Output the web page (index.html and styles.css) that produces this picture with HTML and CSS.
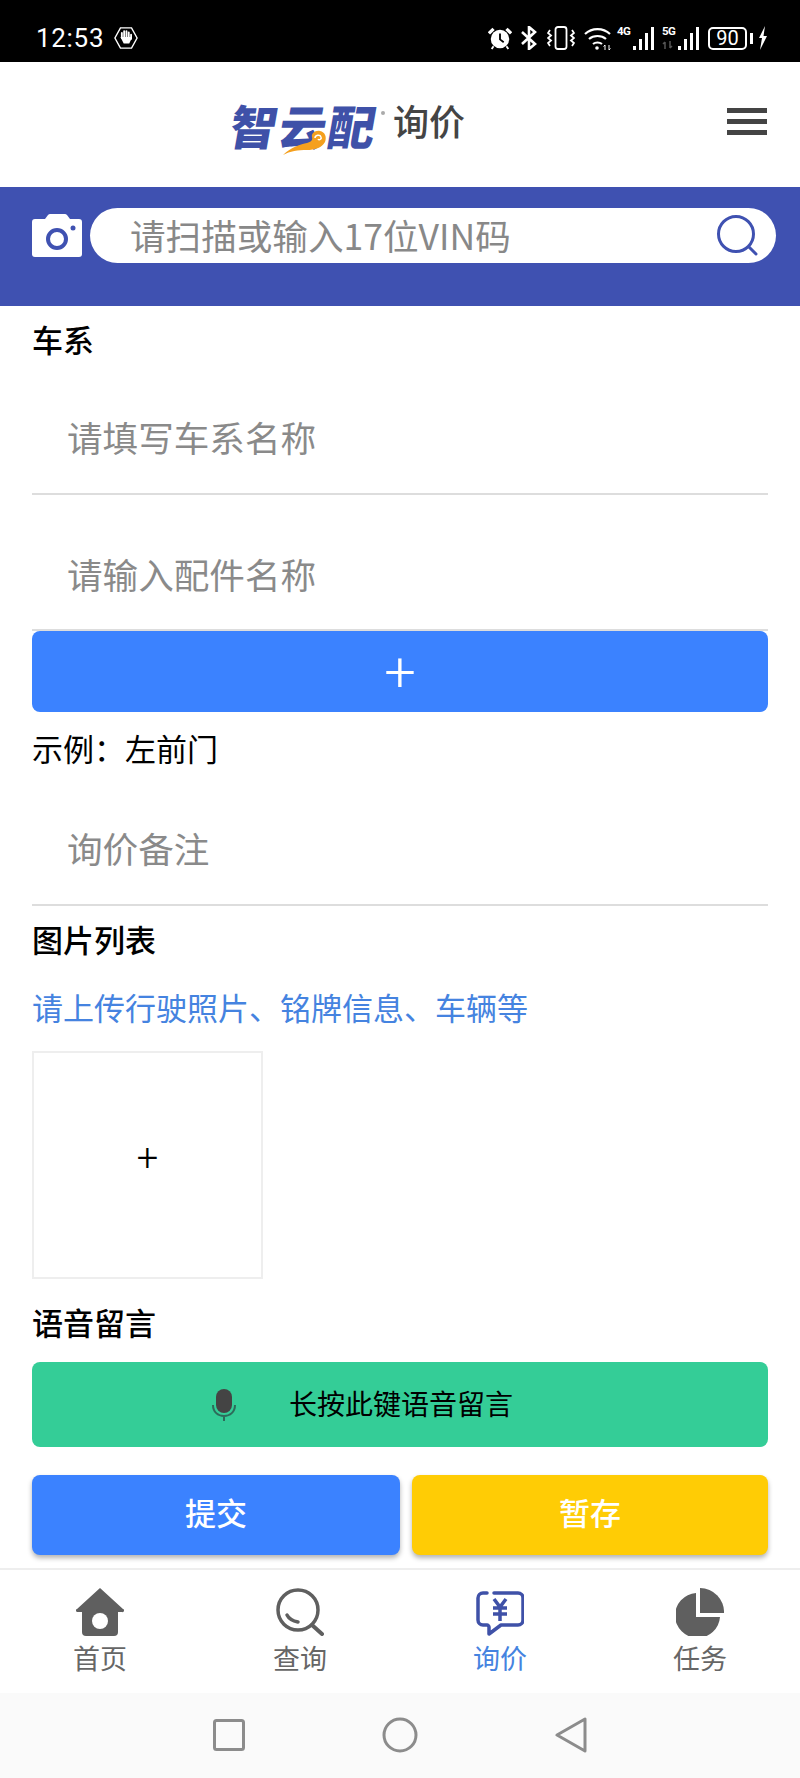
FILE: index.html
```html
<!DOCTYPE html>
<html lang="zh-CN">
<head>
    <meta charset="UTF-8">
    <meta name="viewport" content="width=device-width, initial-scale=1.0">
    <title>智云配 询价</title>
    <link rel="stylesheet" href="styles.css">
</head>
<body>
    <div class="phone">
        <!-- 状态栏 -->
        <div class="statusbar">
            <span class="time">12:53</span>
            <svg class="hand" width="24" height="24" viewBox="0 0 26 26" fill="none">
                <path d="M7 2h12l6 11-6 11H7L1 13z" stroke="#fff" stroke-width="1.500"/>
                <path d="M8.500 13V7.500M11 12V5.500M13.500 12V5.500M16 12.500V7M18.500 14V9.500" stroke="#fff" stroke-width="2" stroke-linecap="round"/>
                <path d="M7 12l2 0h9.500v3l-2 4h-6z" fill="#fff"/>
            </svg>
            <div class="status-right">
                <svg class="st-alarm" width="24" height="24" viewBox="0 0 26 26">
                    <circle cx="13" cy="14" r="10" fill="#fff"/>
                    <path d="M13 8v6.500l4 3" stroke="#000" stroke-width="2" fill="none"/>
                    <path d="M1 8l5-5M25 8l-5-5" stroke="#fff" stroke-width="3.500"/>
                    <path d="M6 22l-2 3M20 22l2 3" stroke="#fff" stroke-width="2"/>
                </svg>
                <svg class="st-bt" width="16" height="24" viewBox="0 0 16 24" fill="none">
                    <path d="M1 6l13 12-6 5V1l6 5L1 18" stroke="#fff" stroke-width="2.600"/>
                </svg>
                <svg class="st-vib" width="28" height="24" viewBox="0 0 28 24" fill="none" stroke="#fff" stroke-width="1.800">
                    <rect x="8.500" y="1" width="11" height="22" rx="2.500"/>
                    <path d="M3 4l-2 3 3 2.500-3 2.500 3 2.500-3 2.500 2 3M25 4l2 3-3 2.500 3 2.500-3 2.500 3 2.500-2 3"/>
                </svg>
                <svg class="st-wifi" width="27" height="24" viewBox="0 0 27 24" fill="none" stroke="#fff" stroke-width="2.200">
                    <path d="M1 8c7-6.500 18-6.500 25 0M5 13c4.500-4 12.500-4 17 0M9 18c2.500-2 6.500-2 9 0"/>
                    <circle cx="13" cy="22" r="1.800" fill="#fff" stroke="none"/>
                    <path d="M21 24v-5M19.500 20.500l1.500-1.500M25 19v5M26.500 22.500L25 24" stroke-width="1"/>
                </svg>
                <div class="signal st-sig4">
                    <span class="net">4G</span>
                    <span class="bar b1"></span><span class="bar b2"></span><span class="bar b3"></span><span class="bar b4"></span>
                </div>
                <div class="signal st-sig5">
                    <span class="net">5G</span>
                    <svg class="net-arrows" width="12" height="8" viewBox="0 0 12 8" fill="none" stroke="#555" stroke-width="1.500">
                        <path d="M3 8V1M1 3l2-2M8 0v7M10 5L8 7"/>
                    </svg>
                    <span class="bar b1"></span><span class="bar b2"></span><span class="bar b3"></span><span class="bar b4"></span>
                </div>
                <div class="battery"><span class="battery-level">90</span></div>
                <span class="battery-tip"></span>
                <svg class="st-bolt" width="9" height="24" viewBox="0 0 9 24">
                    <path d="M7 0L1 12h3l-2 12 7-14H5.500z" fill="#fff"/>
                </svg>
            </div>
        </div>

        <!-- 顶部 -->
        <header class="topbar">
            <div class="logo">
                <span class="logo-text">智云配</span>
                <svg class="logo-swoosh" width="44" height="28" viewBox="0 0 44 28">
                    <path d="M0 28C8 20 18 17 24 16c4-1 6-3 5-6-1-3 3-7 8-6 5 1 7 6 5 11-3 6-11 8-18 8-9 0-17 1-24 5z" fill="#f5a01e"/>
                    <path d="M32 11c0-3 5-4 6-1 1 2-2 4-3 2" fill="none" stroke="#fff" stroke-width="1.500"/>
                </svg>
                <span class="logo-mark"></span>
            </div>
            <span class="page-title">询价</span>
            <div class="menu">
                <span></span><span></span><span></span>
            </div>
        </header>

        <!-- VIN 搜索 -->
        <div class="vinbar">
            <svg class="camera" width="50" height="43" viewBox="0 0 50 43">
                <path d="M3 5h10l3-4q1-1 2-1h15q1 0 2 1l3 4h9a3 3 0 0 1 3 3v32a3 3 0 0 1-3 3H3a3 3 0 0 1-3-3V8a3 3 0 0 1 3-3z" fill="#fff"/>
                <circle cx="25" cy="25" r="9" fill="none" stroke="#3f51b1" stroke-width="4"/>
                <circle cx="41" cy="14" r="2.500" fill="#3f51b1"/>
            </svg>
            <div class="vin-search">
                <span class="vin-text">请扫描或输入17位VIN码</span>
                <svg width="44" height="44" viewBox="0 0 44 44" fill="none" stroke="#3f51b1">
                    <circle cx="21" cy="20" r="17.500" stroke-width="3"/>
                    <path d="M34 33l7 7" stroke-width="3" stroke-linecap="round"/>
                </svg>
            </div>
        </div>

        <!-- 表单 -->
        <form class="form">
            <div class="label label-first">车系</div>
            <input class="field field-car" type="text" placeholder="请填写车系名称">
            <input class="field field-part" type="text" placeholder="请输入配件名称">
            <button class="btn btn-add" type="button">+</button>
            <div class="example">示例：左前门</div>
            <input class="field field-note" type="text" placeholder="询价备注">
            <div class="label label-pics">图片列表</div>
            <div class="tip">请上传行驶照片、铭牌信息、车辆等</div>
            <div class="upload">+</div>
            <div class="label label-voice">语音留言</div>
            <button class="btn btn-voice" type="button">
                <svg width="26" height="32" viewBox="0 0 26 32" fill="none">
                    <rect x="5" y="0" width="16" height="24" rx="8" fill="#444"/>
                    <path d="M2 16c0 7 5 11 11 11s11-4 11-11M13 27v5" stroke="#2d6b5a" stroke-width="2"/>
                </svg>
                <span>长按此键语音留言</span>
            </button>
            <div class="actions">
                <button class="btn btn-submit" type="button">提交</button>
                <button class="btn btn-save" type="button">暂存</button>
            </div>
        </form>

        <!-- 底部导航 -->
        <nav class="tabbar">
            <div class="tab">
                <svg width="48" height="48" viewBox="0 0 48 48">
                    <path d="M24 0L47 21a1.500 1.500 0 0 1-1 3H2a1.500 1.500 0 0 1-1-3z" fill="#5f5f5f"/>
                    <path d="M6 20h36v24a4 4 0 0 1-4 4H10a4 4 0 0 1-4-4z" fill="#5f5f5f"/>
                    <circle cx="24" cy="33" r="8" fill="#fff"/>
                </svg>
                <span>首页</span>
            </div>
            <div class="tab">
                <svg width="48" height="48" viewBox="0 0 48 48" fill="none" stroke="#5f5f5f">
                    <circle cx="22" cy="22" r="20" stroke-width="3.500"/>
                    <path d="M36 37l10 9" stroke-width="4" stroke-linecap="round"/>
                    <path d="M11 27c2 4 6 6 11 7" stroke-width="3.500" stroke-linecap="round"/>
                </svg>
                <span>查询</span>
            </div>
            <div class="tab tab-active">
                <svg width="48" height="48" viewBox="0 0 48 48" fill="none" stroke="#3f51a8">
                    <path d="M11 5H7a5 5 0 0 0-5 5v22a5 5 0 0 0 5 5h4c1 0 2 1 2 2v7l12-9h17a5 5 0 0 0 5-5V10a5 5 0 0 0-5-5H18" stroke-width="3.500" stroke-linecap="round" stroke-linejoin="round"/>
                    <path d="M18 11l6 8 6-8M17 20h14M17 26h14M24 19v14" stroke-width="3.500"/>
                </svg>
                <span>询价</span>
            </div>
            <div class="tab">
                <svg width="48" height="48" viewBox="0 0 48 48" fill="#5f5f5f">
                    <path d="M20 5a22.500 22.500 0 1 0 24 24H20z"/>
                    <path d="M24 0a24 24 0 0 1 24 25H24z"/>
                </svg>
                <span>任务</span>
            </div>
        </nav>

        <!-- 系统导航 -->
        <div class="sysnav">
            <svg width="32" height="32" viewBox="0 0 32 32" fill="none" stroke="#8c8c8c" stroke-width="3">
                <rect x="1.500" y="1.500" width="29" height="29" rx="2"/>
            </svg>
            <svg width="36" height="36" viewBox="0 0 36 36" fill="none" stroke="#8c8c8c" stroke-width="3">
                <circle cx="18" cy="18" r="16"/>
            </svg>
            <svg width="32" height="36" viewBox="0 0 32 36" fill="none" stroke="#8c8c8c" stroke-width="3" stroke-linejoin="round">
                <path d="M2 18L30 2v32z"/>
            </svg>
        </div>
    </div>
</body>
</html>
```

FILE: styles.css
```css
* {
    box-sizing: border-box;
}
body {
    margin: 0;
    background: #fff;
    font-family: "Noto Sans CJK SC", "Noto Sans", sans-serif;
}
.phone {
    width: 800px;
    height: 1778px;
    display: flex;
    flex-direction: column;
    overflow: hidden;
}

/* status bar */
.statusbar {
    height: 62px;
    background: #000;
    color: #fff;
    display: flex;
    align-items: center;
    padding: 14px 33px 0 36px;
}
.time {
    font-family: Roboto, sans-serif;
    font-size: 26px;
    letter-spacing: 0.7px;
}
.hand {
    margin-left: 10px;
}
.status-right {
    margin-left: auto;
    display: flex;
    align-items: center;
}
.st-bt { margin-left: 9px; }
.st-vib { margin-left: 10px; }
.st-wifi { margin-left: 9px; }
.st-sig4 { margin-left: 6px; }
.st-sig5 { margin-left: 8px; }
.st-bolt { margin-left: 5px; }
.signal {
    position: relative;
    width: 37px;
    height: 24px;
    display: flex;
    align-items: flex-end;
    justify-content: flex-end;
    gap: 2.500px;
}
.net {
    position: absolute;
    left: 0;
    top: 0;
    font-family: Roboto, sans-serif;
    font-size: 11.500px;
    font-weight: 700;
    line-height: 11px;
    letter-spacing: -0.500px;
}
.net-arrows {
    position: absolute;
    left: 0;
    bottom: 1px;
}
.bar {
    width: 3.500px;
    background: #fff;
}
.b1 { height: 4px; }
.b2 { height: 11px; }
.b3 { height: 17px; }
.b4 { height: 23px; }
.battery {
    width: 39px;
    height: 23px;
    margin-left: 9px;
    border: 2px solid #fff;
    border-radius: 5px;
    display: flex;
    align-items: center;
    justify-content: center;
}
.battery-level {
    font-family: Roboto, sans-serif;
    font-size: 20px;
    line-height: 1;
}
.battery-tip {
    width: 3px;
    height: 11px;
    background: #fff;
    margin-left: 3px;
}

/* header */
.topbar {
    height: 125px;
    display: flex;
    align-items: center;
    padding: 0 33px 6px 231px;
}
.logo {
    position: relative;
    width: 152px;
    height: 50px;
    margin-top: 6px;
}
.logo-text {
    display: block;
    color: #3f51a8;
    font-size: 47px;
    font-weight: 900;
    line-height: 50px;
    letter-spacing: 2px;
    white-space: nowrap;
    transform: skewX(-10deg);
}
.logo-swoosh {
    position: absolute;
    left: 52px;
    top: 27px;
}
.logo-mark {
    position: absolute;
    left: 150px;
    top: 11px;
    width: 4px;
    height: 4px;
    border-radius: 50%;
    background: #aaa;
}
.page-title {
    margin: 0 0 4px 10px;
    color: #444;
    font-size: 36px;
    font-weight: 500;
}
.menu {
    margin-left: auto;
    width: 40px;
    display: flex;
    flex-direction: column;
    gap: 6px;
}
.menu span {
    height: 5px;
    background: #444;
}

/* vin bar */
.vinbar {
    height: 119px;
    background: #3f51b1;
    display: flex;
    align-items: flex-start;
    padding: 21px 24px 0 32px;
}
.camera {
    margin: 6px 8px 0 0;
    flex: none;
}
.vin-search {
    flex: 1;
    height: 55px;
    background: #fff;
    border-radius: 28px;
    display: flex;
    align-items: center;
    justify-content: space-between;
    padding: 0 17px 0 40px;
}
.vin-text {
    color: #888;
    font-size: 35.600px;
    margin-bottom: 2px;
}

/* form */
.form {
    flex: 1;
    padding: 0 32px;
}
.label {
    font-size: 31px;
    font-weight: 500;
    color: #000;
    line-height: 44px;
}
.label-first {
    margin-top: 11px;
}
.field {
    display: block;
    width: 100%;
    padding: 0 35px;
    border: 0;
    border-bottom: 2px solid #ddd;
    border-radius: 0;
    background: transparent;
    outline: none;
    font-family: inherit;
    font-size: 35.600px;
}
.field::placeholder {
    color: #8a8a8a;
    opacity: 1;
}
.field-car {
    height: 134px;
    padding-top: 19px;
}
.field-part {
    height: 136px;
    padding-top: 22px;
}
.field-note {
    height: 136px;
    padding-top: 21px;
}
.btn {
    display: block;
    border: 0;
    border-radius: 8px;
    font-family: inherit;
    cursor: pointer;
}
.btn-add {
    width: 100%;
    height: 81px;
    background: #3b82ff;
    color: #fff;
    font-family: Roboto, sans-serif;
    font-size: 56px;
    font-weight: 300;
    line-height: 1;
}
.example {
    margin-top: 14px;
    font-size: 31px;
    line-height: 44px;
}
.label-pics {
    margin-top: 11px;
}
.tip {
    margin-top: 24px;
    color: #4583e0;
    font-size: 31px;
    line-height: 44px;
}
.upload {
    width: 231px;
    height: 228px;
    margin-top: 22px;
    border: 2px solid #eee;
    display: flex;
    align-items: center;
    justify-content: center;
    padding-bottom: 14px;
    font-family: Roboto, sans-serif;
    font-size: 38px;
    font-weight: 300;
    color: #000;
}
.label-voice {
    margin-top: 21px;
}
.btn-voice {
    width: 100%;
    height: 85px;
    margin-top: 18px;
    background: #34cd97;
    color: #000;
    font-size: 28px;
    display: flex;
    align-items: center;
    justify-content: center;
    gap: 52px;
    padding: 0 76px 0 0;
}
.btn-voice span {
    margin-bottom: 3px;
}
.actions {
    display: flex;
    gap: 12px;
    margin-top: 28px;
}
.btn-submit,
.btn-save {
    height: 80px;
    padding-bottom: 8px;
    color: #fff;
    font-size: 31px;
    font-weight: 500;
    box-shadow: 0 3px 5px rgba(0, 0, 0, 0.3);
}
.btn-submit {
    width: 368px;
    background: #3b82ff;
}
.btn-save {
    flex: 1;
    background: #ffcc05;
}

/* bottom nav */
.tabbar {
    height: 125px;
    border-top: 2px solid #eee;
    display: grid;
    grid-template-columns: repeat(4, 1fr);
    padding-top: 18px;
}
.tab {
    display: flex;
    flex-direction: column;
    align-items: center;
    color: #666;
    font-size: 27px;
    line-height: 38px;
    gap: 3px;
}
.tab-active {
    color: #4583e0;
}

.sysnav {
    height: 85px;
    background: #fafafa;
    display: flex;
    align-items: center;
    justify-content: center;
    gap: 137px;
    padding-bottom: 1px;
}
```
